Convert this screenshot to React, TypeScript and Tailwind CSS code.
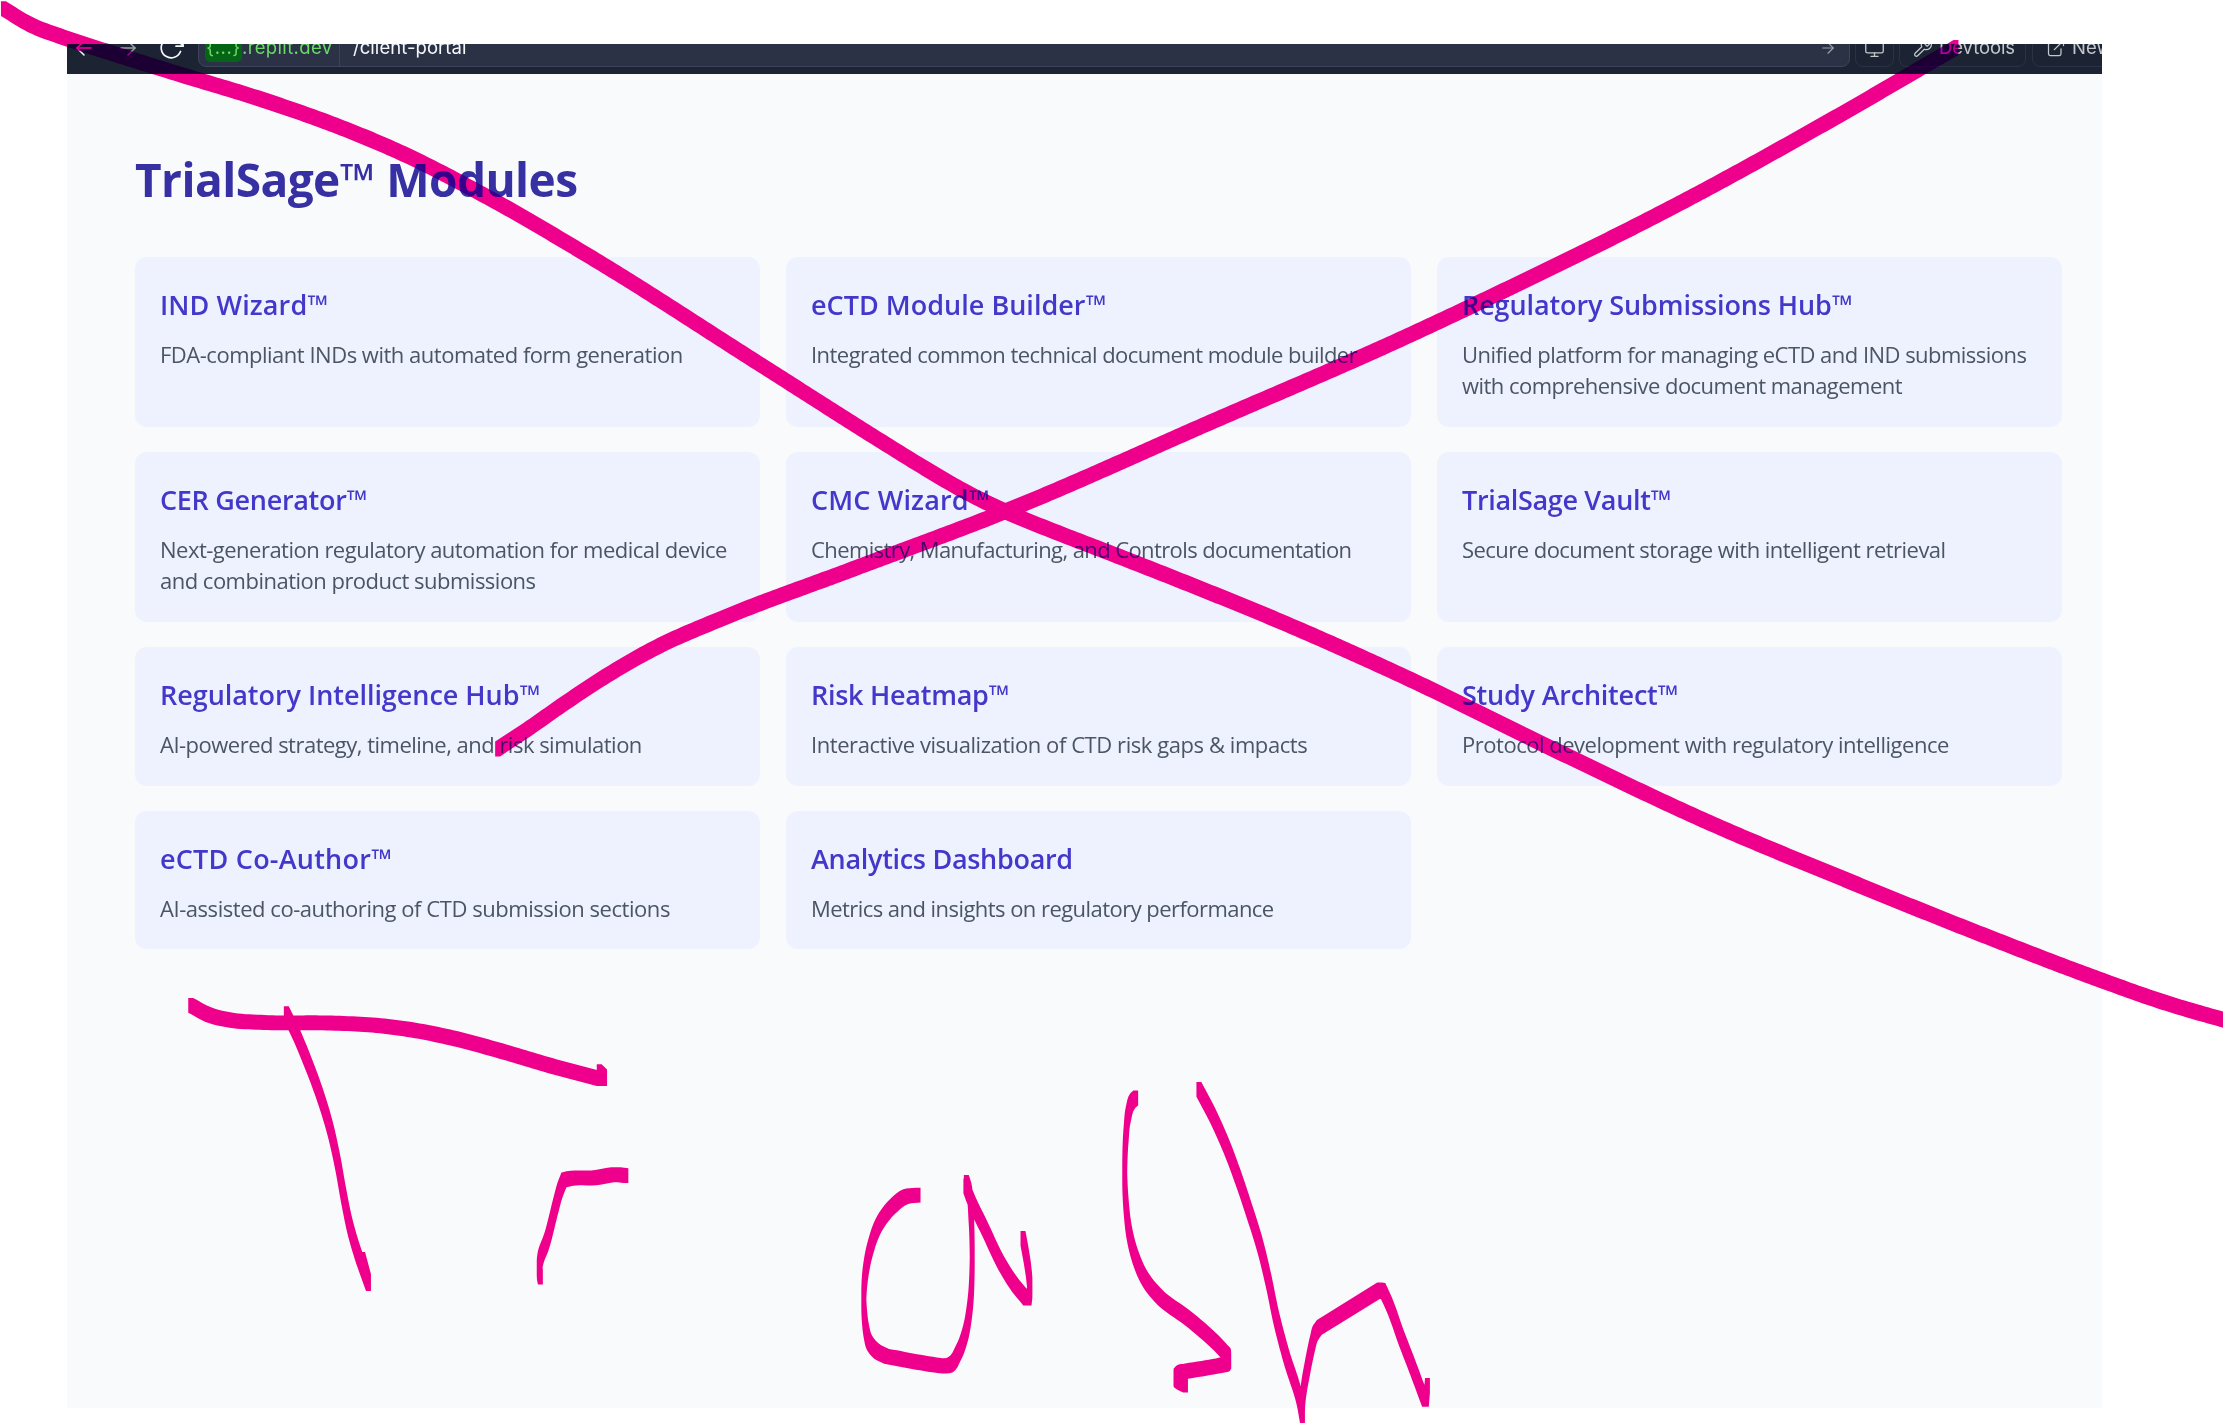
import React from "react";
import { ArrowLeft, ArrowRight, ExternalLink, Monitor, Wrench } from "lucide-react";

type Point = [number, number];

type Module = { title: string; text: string; titleClass: string; textClass: string };

const modules: Module[] = [
  {
    title: "IND Wizard™",
    text: "FDA-compliant INDs with automated form generation",
    titleClass: "tracking-[0.1px]",
    textClass: "tracking-[-0.49px]",
  },
  {
    title: "eCTD Module Builder™",
    text: "Integrated common technical document module builder",
    titleClass: "tracking-[0.02px]",
    textClass: "tracking-[-0.55px]",
  },
  {
    title: "Regulatory Submissions Hub™",
    text: "Unified platform for managing eCTD and IND submissions with comprehensive document management",
    titleClass: "tracking-[-0.1px]",
    textClass: "tracking-[-0.53px]",
  },
  {
    title: "CER Generator™",
    text: "Next-generation regulatory automation for medical device and combination product submissions",
    titleClass: "tracking-[-0.3px]",
    textClass: "tracking-[-0.51px]",
  },
  {
    title: "CMC Wizard™",
    text: "Chemistry, Manufacturing, and Controls documentation",
    titleClass: "tracking-[0.15px]",
    textClass: "tracking-[-0.6px]",
  },
  {
    title: "TrialSage Vault™",
    text: "Secure document storage with intelligent retrieval",
    titleClass: "tracking-[-0.33px]",
    textClass: "tracking-[-0.54px]",
  },
  {
    title: "Regulatory Intelligence Hub™",
    text: "AI-powered strategy, timeline, and risk simulation",
    titleClass: "tracking-[-0.04px]",
    textClass: "tracking-[-0.51px]",
  },
  {
    title: "Risk Heatmap™",
    text: "Interactive visualization of CTD risk gaps & impacts",
    titleClass: "tracking-[-0.27px]",
    textClass: "tracking-[-0.43px]",
  },
  {
    title: "Study Architect™",
    text: "Protocol development with regulatory intelligence",
    titleClass: "tracking-[-0.22px]",
    textClass: "tracking-[-0.48px]",
  },
  {
    title: "eCTD Co-Author™",
    text: "AI-assisted co-authoring of CTD submission sections",
    titleClass: "tracking-[0.22px]",
    textClass: "tracking-[-0.45px]",
  },
  {
    title: "Analytics Dashboard",
    text: "Metrics and insights on regulatory performance",
    titleClass: "tracking-[-0.3px]",
    textClass: "tracking-[-0.55px]",
  },
];

// Half size of the rectangular marker tip.
const NIB_X = 2.45;
const NIB_Y = 7.4;

// Points of the lower right word are kept in a finer local grid.
const fine = (points: Point[]): Point[] => points.map(([x, y]) => [800 + x / 2.24, 1040 + y / 3]);

// Each run is smoothed on its own; sharp turns fall between two runs.
const runs: Point[][] = [
  [
    [3.4, 8.6], [30, 24.5], [67, 38.6], [105, 51], [176, 73.2], [268, 101.5], [335, 125.2],
    [400, 152.3], [486.7, 196.7], [590, 256.7], [760, 364.3], [884, 443], [924.5, 468],
    [965, 491.5], [1006, 511.7], [1057, 532.5], [1108, 552.2], [1185, 582.5], [1276.5, 619.8], [1400, 674.7],
    [1557, 751], [1710, 823], [1850, 881.5], [1983, 935], [2102, 980.5], [2160, 1001], [2222, 1019.3], [2230, 1021.5],
  ],
  [
    [1956, 47.5], [1831, 120], [1686, 200], [1500, 292.5], [1400, 339.5], [1210, 422.5],
    [1005, 511.5], [853, 569], [720, 619.3], [660, 645.5], [604.5, 677], [560, 706.5], [528.6, 728.5], [497.6, 749],
  ],
  [
    [190.7, 1005.3], [208, 1014.5], [232, 1020.3], [262, 1022.4], [329, 1023], [374.5, 1025.2], [409.5, 1029.5],
    [448, 1037], [501, 1051], [550, 1065.5], [599.2, 1078.6],
  ],
  [[599.2, 1078.6], [604.6, 1078.6]],
  [[604.6, 1076.8], [599.2, 1071.6]],
  [
    [286.3, 1013.7], [294.5, 1030.3], [307, 1060], [320, 1095], [330, 1128], [337.8, 1163], [343.7, 1196],
    [350.6, 1229], [357.3, 1252], [368.5, 1283.7],
  ],
  [[368.5, 1281.5], [362.6, 1259.3]],
  [[625.9, 1175.7], [618, 1174.7], [593.7, 1177.8], [569, 1178.7], [563.9, 1180]],
  [[563.9, 1180], [560, 1190], [555.5, 1206.7], [546, 1243], [540.5, 1258], [539.4, 1272], [540.4, 1277]],
  fine([
    [264.5, 465.5], [237, 470], [207, 500], [178, 551], [158, 622], [147, 695], [143, 760], [144.5, 830],
    [148.5, 873], [155.5, 908], [171, 933], [194, 949],
  ]),
  fine([[194, 949], [310, 976], [323, 978], [336, 975], [355, 938], [370, 883], [380, 808], [385.5, 690], [385.5, 610], [383, 520], [378, 450], [372.5, 427]]),
  fine([[371.5, 438], [379.5, 467], [416, 572], [454, 677], [480, 732], [505.5, 774]]),
  fine([[505.5, 774], [513, 774]]),
  fine([[513, 774], [515, 750], [512.5, 700], [507, 650], [499.5, 595]]),
  fine([
    [752, 174], [745.5, 182], [735.5, 222], [730.5, 282], [727.5, 372], [727.5, 420], [730.5, 498], [737.5, 578],
    [750.5, 648], [773.5, 718], [805.5, 771], [872, 838], [952, 937], [959, 948], [960.5, 963],
  ]),
  fine([[960.5, 963], [957, 971], [945, 975], [905, 985], [868, 993], [850, 998], [842.5, 1008]]),
  fine([[842.5, 1008], [842.5, 1018], [850, 1026], [863.5, 1035]]),
  fine([
    [893.5, 148], [924.5, 227], [954.5, 317], [982.5, 417], [1004.5, 505], [1029.5, 612], [1049.5, 722],
    [1066.5, 832], [1089.5, 950], [1119, 1078], [1125.5, 1127],
  ]),
  fine([[1125.5, 1127], [1126, 1078], [1137.5, 978], [1149, 905], [1153.5, 882], [1163.5, 862]]),
  fine([[1163.5, 862], [1298.5, 750]]),
  fine([[1298.5, 750], [1305.5, 751]]),
  fine([[1305.5, 751], [1319.5, 792], [1346.5, 892], [1369.5, 972], [1399, 1078]]),
  fine([[1399, 1078], [1403, 1078]]),
  fine([[1403, 1078], [1405.5, 1036]]),
];

const distance = (a: Point, b: Point) => Math.max(Math.hypot(b[0] - a[0], b[1] - a[1]), 0.001);

// Slope at point i, per unit of length, weighted towards the nearer neighbour.
function slopeAt(points: Point[], i: number, k: 0 | 1): number {
  const rate = (a: Point, b: Point) => (b[k] - a[k]) / distance(a, b);
  if (i === 0) return rate(points[0], points[1]);
  if (i === points.length - 1) return rate(points[i - 1], points[i]);
  const before = distance(points[i - 1], points[i]);
  const after = distance(points[i], points[i + 1]);
  return (
    (rate(points[i - 1], points[i]) * after + rate(points[i], points[i + 1]) * before) / (before + after)
  );
}

function smooth(points: Point[]): Point[] {
  if (points.length < 3) return points;
  const out: Point[] = [points[0]];
  for (let i = 0; i < points.length - 1; i++) {
    const p = points[i];
    const q = points[i + 1];
    const length = distance(p, q);
    const steps = Math.max(4, Math.round(length / 4));
    for (let s = 1; s <= steps; s++) {
      const t = s / steps;
      const at = (k: 0 | 1) =>
        (2 * t ** 3 - 3 * t ** 2 + 1) * p[k] +
        (t ** 3 - 2 * t ** 2 + t) * slopeAt(points, i, k) * length +
        (3 * t ** 2 - 2 * t ** 3) * q[k] +
        (t ** 3 - t ** 2) * slopeAt(points, i + 1, k) * length;
      out.push([at(0), at(1)]);
    }
  }
  return out;
}

// Outline that the marker tip sweeps between two points.
function sweep(a: Point, b: Point): string {
  const [p, q] = a[0] <= b[0] ? [a, b] : [b, a];
  const corner = (c: Point, sx: number, sy: number) =>
    `${(c[0] + sx * NIB_X).toFixed(2)} ${(c[1] + sy * NIB_Y).toFixed(2)}`;
  const outline =
    q[1] >= p[1]
      ? [corner(p, -1, -1), corner(p, 1, -1), corner(q, 1, -1), corner(q, 1, 1), corner(q, -1, 1), corner(p, -1, 1)]
      : [corner(p, -1, 1), corner(p, -1, -1), corner(q, -1, -1), corner(q, 1, -1), corner(q, 1, 1), corner(p, 1, 1)];
  return `M${outline.join("L")}Z`;
}

const ink = runs
  .map((run) => {
    const line = smooth(run);
    return line.slice(1).map((point, i) => sweep(line[i], point)).join("");
  })
  .join("");

function ReloadIcon() {
  return (
    <svg
      className="ml-[19px] size-[26px] shrink-0"
      viewBox="0 0 26 26"
      fill="none"
      stroke="currentColor"
      strokeWidth="1.7"
      strokeLinecap="round"
      strokeLinejoin="round"
    >
      <path d="M21.5 16.5A10 10 0 1 1 20 6.5l4 4.5" />
      <path d="M24 4v7.2h-7" />
    </svg>
  );
}

function BrowserBar() {
  return (
    <div className="flex h-[30px] flex-col justify-end overflow-hidden bg-[#1c2333] font-['Inter',sans-serif] text-[18.5px] text-[#f5f9fc]">
      <div className="mb-[7px] flex h-[38px] w-[2120px] shrink-0 items-center">
        <ArrowLeft className="ml-[5px] size-6 shrink-0" strokeWidth={1.5} />
        <ArrowRight className="ml-5 size-6 shrink-0 text-[#9da2a6]" strokeWidth={1.5} />
        <ReloadIcon />
        <div className="ml-[13px] flex h-full w-[1652px] shrink-0 items-center rounded-lg border border-[#3c445c] bg-[#2b3245]">
          <div className="flex h-full w-[141px] items-center border-r border-[#3c445c] pl-1.5 text-[#6bd968]">
            <span className="flex h-[27px] w-[37px] shrink-0 items-center justify-center rounded-[5px] bg-[#056416] tracking-[0.5px]">
              {"{...}"}
            </span>
            <span className="tracking-[0.35px]">.replit.dev</span>
          </div>
          <span className="ml-[13px] tracking-[0.05px]">/client-portal</span>
          <ArrowRight className="mr-[12px] ml-auto size-[18px] text-[#9da2a6]" strokeWidth={1.5} />
        </div>
        <div className="ml-[5px] flex h-full w-[39px] shrink-0 items-center justify-center rounded-lg border border-[#2b3245] text-[#c2c8cc]">
          <Monitor className="size-[21px]" strokeWidth={1.5} />
        </div>
        <div className="ml-[5px] flex h-full w-[127px] shrink-0 items-center gap-[6px] rounded-lg border border-[#2b3245] pl-[13px] text-[#c2c8cc]">
          <Wrench className="size-5 shrink-0" strokeWidth={1.5} />
          <span className="tracking-[-0.1px]">Devtools</span>
        </div>
        <div className="ml-[6px] flex h-full w-[130px] shrink-0 items-center gap-[6px] rounded-lg border border-[#2b3245] pl-[13px] text-[#c2c8cc]">
          <ExternalLink className="size-5 shrink-0" strokeWidth={1.5} />
          <span className="whitespace-nowrap">New tab</span>
        </div>
      </div>
    </div>
  );
}

function ModuleCard({ title, text, titleClass, textClass }: Module) {
  return (
    <article className="rounded-xl bg-[#eef2ff] pt-[30px] pr-5 pl-[25px]">
      <h2 className={`text-[27px] leading-9 font-semibold text-[#4338ca] ${titleClass}`}>{title}</h2>
      <p className={`mt-4 text-[22px] leading-[31px] text-[#4b5563] ${textClass}`}>{text}</p>
    </article>
  );
}

export default function App() {
  return (
    <div className="relative h-[1424px] w-[2223px] overflow-hidden bg-white pt-[44px] pl-[67px]">
      <div className="flex h-[1364px] w-[2035px] flex-col overflow-hidden bg-[#f9fafc]">
        <BrowserBar />
        <main className="pt-[77px] pr-[40px] pl-[68px] font-['Open_Sans',sans-serif]">
          <h1 className="h-[106px] text-[46px] leading-[56px] font-bold tracking-[-0.55px] text-[#3730a3]">
            TrialSage™ Modules
          </h1>
          <div className="grid grid-cols-3 grid-rows-[170px_170px_139px_138px] gap-x-[26px] gap-y-[25px]">
            {modules.map((m) => (
              <ModuleCard key={m.title} {...m} />
            ))}
          </div>
        </main>
      </div>
      <svg
        className="pointer-events-none absolute inset-0 mix-blend-darken"
        width="2223"
        height="1424"
        viewBox="0 0 2223 1424"
      >
        <path d={ink} fill="#ee008c" />
      </svg>
    </div>
  );
}
